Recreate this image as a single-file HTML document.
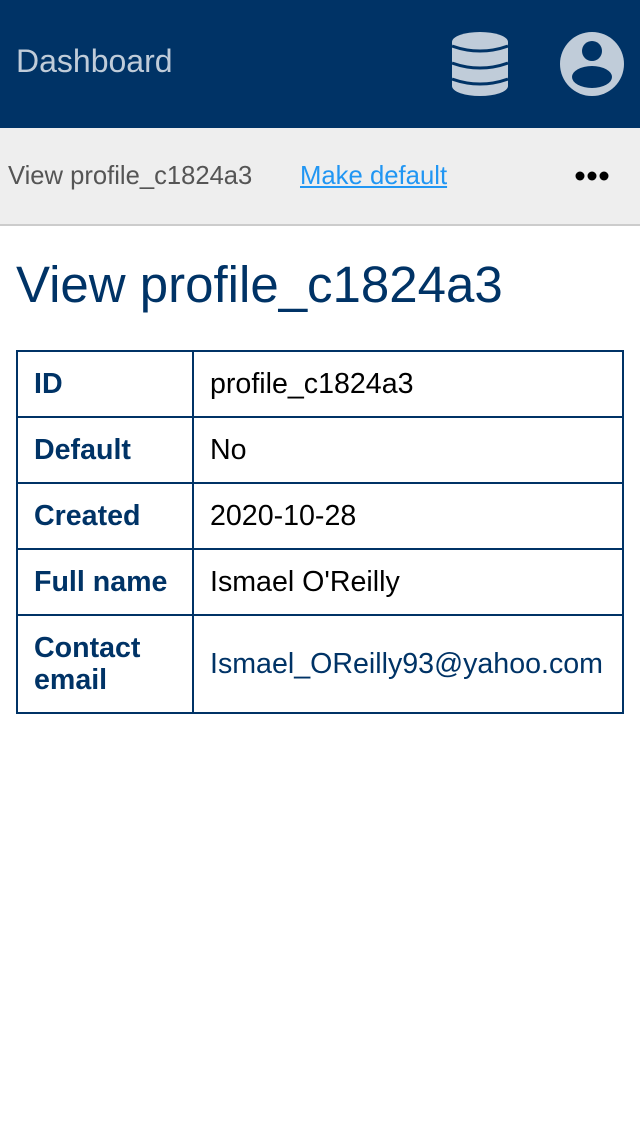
<!DOCTYPE html>
<html><head><style>
body{margin:0;width:640px;height:1136px;background:#fff;font-family:"Liberation Sans",sans-serif;position:relative;overflow:hidden}
.hdr{position:absolute;left:0;top:0;width:640px;height:128px;background:#003366}
.hdr .t{position:absolute;left:16px;top:43px;font-size:32px;color:#c0ccd9}
.bar{position:absolute;left:0;top:128px;width:640px;height:96px;background:#eee;border-bottom:2px solid #ccc}
h1{position:absolute;left:16px;top:255px;margin:0;font-weight:normal;font-size:51px;color:#003366}
table{position:absolute;left:16px;top:350px;width:608px;border-collapse:collapse;font-size:28.6px}
td{border:2px solid #003366;padding:0 16px;height:64px}
td.k{font-weight:bold;color:#003366;width:142px;line-height:32px}
</style></head><body>
<div class="hdr"><div class="t">Dashboard</div>
<svg style="position:absolute;left:452px;top:32px" width="56" height="64" viewBox="0 0 56 64">
<rect x="0" y="0" width="56" height="64" rx="28" ry="10" fill="#c0ccd9"/>
<path d="M0 14 Q28 24 56 14 M0 31 Q28 41 56 31 M0 47 Q28 57 56 47" stroke="#003366" stroke-width="3" fill="none"/>
</svg>
<svg style="position:absolute;left:560px;top:32px" width="64" height="64" viewBox="0 0 64 64">
<circle cx="32" cy="32" r="32" fill="#c0ccd9"/>
<circle cx="32" cy="19" r="10" fill="#003366"/>
<ellipse cx="32" cy="45" rx="20" ry="11" fill="#003366"/>
</svg></div>
<div class="bar"></div>
<div style="position:absolute;left:8px;top:162px;font-size:25.6px;color:#555">View profile_c1824a3</div>
<div style="position:absolute;left:300px;top:162px;font-size:25.7px;color:#2196f3;text-decoration:underline">Make default</div>
<svg style="position:absolute;left:574px;top:170px" width="36" height="12"><circle cx="6" cy="6" r="4.5"/><circle cx="18" cy="6" r="4.5"/><circle cx="30" cy="6" r="4.5"/></svg>
<h1>View profile_c1824a3</h1>
<table>
<tr><td class="k">ID</td><td>profile_c1824a3</td></tr>
<tr><td class="k">Default</td><td>No</td></tr>
<tr><td class="k">Created</td><td>2020-10-28</td></tr>
<tr><td class="k">Full name</td><td>Ismael O'Reilly</td></tr>
<tr><td class="k" style="height:96px">Contact email</td><td style="color:#003366">Ismael_OReilly93@yahoo.com</td></tr>
</table>
</body></html>
